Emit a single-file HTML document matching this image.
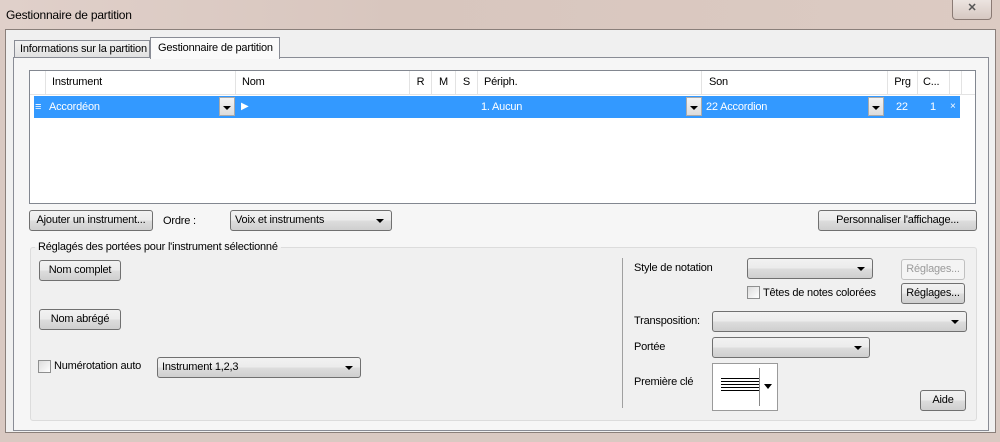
<!DOCTYPE html>
<html><head><meta charset="utf-8"><style>
*{box-sizing:border-box;margin:0;padding:0}
body{width:1000px;height:442px;overflow:hidden;position:relative;font-family:"Liberation Sans",sans-serif;font-size:11px;letter-spacing:-0.2px;color:#000;background:#d9c9c2;white-space:nowrap}
.a{position:absolute}
.btn{position:absolute;border:1px solid #707070;border-radius:3px;background:linear-gradient(#f2f2f2,#ebebeb 50%,#dddddd 51%,#cfcfcf);text-align:center;line-height:19px;height:21px}
.cb{position:absolute;border:1px solid #707070;border-radius:3px;background:linear-gradient(#f2f2f2,#ebebeb 50%,#dddddd 51%,#cfcfcf);height:21px;line-height:19px;padding-left:4px}
.cb:after{content:"";position:absolute;right:7px;top:8px;border-left:4px solid transparent;border-right:4px solid transparent;border-top:4px solid #000}
.chk{position:absolute;width:13px;height:13px;border:1px solid #8e8f8f;background:linear-gradient(135deg,#dcdcdc,#fff)}
.hd{position:absolute;top:0;height:23px;line-height:23px;border-right:1px solid #e3e3e3}
.dd{position:absolute;top:2px;width:16px;height:19px;background:linear-gradient(#f4f4f4,#dcdcdc);border:1px solid #aaa}
.dd:after{content:"";position:absolute;left:3px;top:8px;border-left:4px solid transparent;border-right:4px solid transparent;border-top:4px solid #000}
</style></head><body>
<div class="a" style="left:0;top:0;width:1000px;height:30px;background:linear-gradient(90deg,#e0d0ca,#d8c6be 40%,#dccbc3)"></div>
<div class="a" style="left:6px;top:8px;font-size:12px">Gestionnaire de partition</div>
<div class="a" style="left:952px;top:0;width:40px;height:20px;border:1px solid #8a7a74;border-top:none;border-radius:0 0 4px 4px;background:linear-gradient(#ece4e0,#d6c8c2);text-align:center;color:#555;font-weight:bold;line-height:16px">✕</div>
<div class="a" style="left:5px;top:29px;width:991px;height:404px;background:#f0f0f0;border:1px solid #8a7f7a"></div>
<div class="a" style="left:14px;top:40px;width:136px;height:18px;border:1px solid #898c95;border-bottom:none;background:linear-gradient(#f2f2f2,#e0e0e0);line-height:16px;padding-left:5px;overflow:hidden">Informations sur la partition</div>
<div class="a" style="left:150px;top:37px;width:130px;height:22px;border:1px solid #898c95;border-bottom:none;background:#fafafa;line-height:20px;padding-left:7px;z-index:2">Gestionnaire de partition</div>
<div class="a" style="left:13px;top:57px;width:976px;height:374px;border:1px solid #898c95;background:#f6f6f6"></div>
<div class="a" style="left:29px;top:70px;width:947px;height:134px;border:1px solid #828790;background:#fff">
 <div class="a" style="left:0;top:0;width:945px;height:24px;background:#fff;border-bottom:1px solid #e3e3e3">
  <div class="hd" style="left:0;width:16px"></div>
  <div class="hd" style="left:16px;width:190px;padding-left:6px">Instrument</div>
  <div class="hd" style="left:206px;width:174px;padding-left:6px">Nom</div>
  <div class="hd" style="left:380px;width:22px;text-align:center">R</div>
  <div class="hd" style="left:402px;width:24px;text-align:center">M</div>
  <div class="hd" style="left:426px;width:22px;text-align:center">S</div>
  <div class="hd" style="left:448px;width:224px;padding-left:6px">Périph.</div>
  <div class="hd" style="left:672px;width:186px;padding-left:7px">Son</div>
  <div class="hd" style="left:858px;width:30px;text-align:center">Prg</div>
  <div class="hd" style="left:888px;width:32px;padding-left:5px">C...</div>
  <div class="hd" style="left:920px;width:12px"></div>
 </div>
 <div class="a" style="left:4px;top:25px;width:926px;height:22px;background:#3399ff;color:#fff;line-height:22px">
  <span class="a" style="left:1px">≡</span>
  <span class="a" style="left:15px">Accordéon</span>
  <div class="dd" style="left:185px;top:1px"></div>
  <span class="a" style="left:207px;font-size:10px">▶</span>
  <span class="a" style="left:447px">1. Aucun</span>
  <div class="dd" style="left:652px;top:1px"></div>
  <span class="a" style="left:672px">22 Accordion</span>
  <div class="dd" style="left:834px;top:1px"></div>
  <span class="a" style="left:862px">22</span>
  <span class="a" style="left:896px">1</span>
  <span class="a" style="left:916px;font-size:10px">×</span>
 </div>
</div>
<div class="btn" style="left:29px;top:210px;width:124px">Ajouter un instrument...</div>
<div class="a" style="left:163px;top:215px">Ordre :</div>
<div class="cb" style="left:230px;top:210px;width:162px">Voix et instruments</div>
<div class="btn" style="left:818px;top:210px;width:159px">Personnaliser l'affichage...</div>
<div class="a" style="left:30px;top:247px;width:947px;height:174px;border:1px solid #dcdcdc;border-radius:3px;background:#f0f0f0"></div>
<div class="a" style="left:35px;top:241px;padding:0 3px;background:linear-gradient(#f6f6f6 50%,#f0f0f0 50%)">Réglagés des portées pour l'instrument sélectionné</div>
<div class="btn" style="left:39px;top:260px;width:82px">Nom complet</div>
<div class="btn" style="left:39px;top:309px;width:82px">Nom abrégé</div>
<div class="chk" style="left:38px;top:360px"></div>
<div class="a" style="left:54px;top:360px">Numérotation auto</div>
<div class="cb" style="left:157px;top:357px;width:204px">Instrument 1,2,3</div>
<div class="a" style="left:622px;top:258px;width:1px;height:150px;background:#a0a0a0"></div>
<div class="a" style="left:634px;top:262px">Style de notation</div>
<div class="cb" style="left:747px;top:258px;width:126px"></div>
<div class="btn" style="left:901px;top:259px;width:64px;color:#9a9a9a;border-color:#c0c0c0;background:#f4f4f4">Réglages...</div>
<div class="chk" style="left:747px;top:286px"></div>
<div class="a" style="left:763px;top:287px">Têtes de notes colorées</div>
<div class="btn" style="left:901px;top:283px;width:64px">Réglages...</div>
<div class="a" style="left:634px;top:315px">Transposition:</div>
<div class="cb" style="left:712px;top:311px;width:255px"></div>
<div class="a" style="left:634px;top:341px">Portée</div>
<div class="cb" style="left:712px;top:337px;width:158px"></div>
<div class="a" style="left:634px;top:376px">Première clé</div>
<div class="a" style="left:712px;top:363px;width:66px;height:48px;border:1px solid #9a9a9a;background:#fff">
 <div class="a" style="left:8px;top:14px;width:38px;height:13px;border-top:1px solid #000;border-bottom:1px solid #000"></div>
 <div class="a" style="left:8px;top:17px;width:38px;height:7px;border-top:1px solid #000;border-bottom:1px solid #000"></div>
 <div class="a" style="left:8px;top:20px;width:38px;height:1px;background:#000"></div>
 <div class="a" style="left:46px;top:4px;width:1px;height:38px;background:#888"></div>
 <div class="a" style="left:51px;top:20px;border-left:4px solid transparent;border-right:4px solid transparent;border-top:5px solid #000"></div>
</div>
<div class="btn" style="left:920px;top:390px;width:46px">Aide</div>
</body></html>
